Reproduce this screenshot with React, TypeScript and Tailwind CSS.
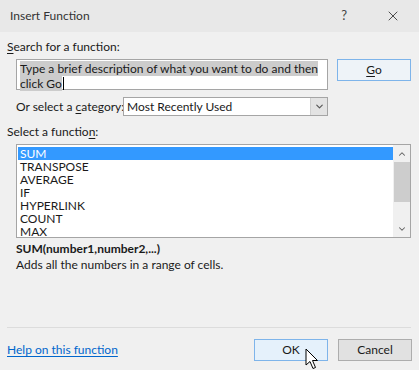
import { ChevronDown, ChevronUp, X } from 'lucide-react';

const functions = ['SUM', 'TRANSPOSE', 'AVERAGE', 'IF', 'HYPERLINK', 'COUNT', 'MAX'];

function Cursor() {
  return (
    <svg
      className="absolute left-[305px] top-[348px]"
      width="14"
      height="22"
      viewBox="0 0 14 22"
    >
      <path
        d="M1 1 L1 17 L5 13.5 L8 20.5 L10.5 19.5 L7.5 12.5 L12.5 12.5 Z"
        fill="white"
        stroke="black"
        strokeWidth="1"
        strokeLinejoin="round"
      />
    </svg>
  );
}

export default function App() {
  return (
    <div className="relative w-[419px] h-[370px] overflow-hidden bg-[#f0f0f0] font-['Lato',sans-serif] text-[12px] text-[#1a1a1a] whitespace-nowrap">
      {/* title bar */}
      <div className="flex h-[32px] items-center bg-[#e8e8e8] pl-[10px]">
        <span className="flex-1 text-[12px] text-[#333]">Insert Function</span>
        <span className="mr-[38px] text-[13px] text-[#444]">?</span>
        <X className="mr-[18px] h-[16px] w-[16px] text-[#333]" strokeWidth={1.3} />
      </div>

      <div className="flex flex-col px-[7px] pt-[7px]">
        <div className="h-[16px] leading-[16px]">
          <span className="underline underline-offset-2">S</span>earch for a function:
        </div>

        <div className="mt-[4px] flex items-start">
          <div className="ml-[9px] h-[31px] w-[312px] whitespace-normal border border-[#a5a5a5] bg-white px-[3px] pt-[2px] leading-[13px]">
            <span className="bg-[#cccccc]">
              Type a brief description of what you want to do and then click Go
            </span>
            <span className="ml-[1px] inline-block h-[13px] w-[1px] translate-y-[2px] bg-black" />
          </div>
          <button className="ml-[9px] h-[22px] w-[74px] border border-[#7eb4ea] bg-[#eef3f8] text-[12px]">
            <span className="underline underline-offset-2">G</span>o
          </button>
        </div>

        <div className="mt-[7px] flex h-[19px] items-center pl-[9px]">
          <span className="w-[107px]">
            Or select a <span className="underline underline-offset-2">c</span>ategory:
          </span>
          <div className="flex h-[19px] w-[205px] items-stretch border border-[#a5a5a5] bg-white">
            <span className="flex-1 pl-[3px] leading-[17px]">Most Recently Used</span>
            <span className="flex w-[17px] items-center justify-center border-l border-[#cfcfcf] bg-[#e3e3e3]">
              <ChevronDown className="h-[11px] w-[11px] text-[#555]" strokeWidth={2.5} />
            </span>
          </div>
        </div>

        <div className="mt-[8px] h-[16px] leading-[16px]">
          Select a functio<span className="underline underline-offset-2">n</span>:
        </div>

        <div className="ml-[9px] mt-[4px] flex h-[94px] w-[395px] border border-[#a5a5a5] bg-white">
          <div className="flex-1 pl-[1px] pt-[2px]">
            {functions.map((f, i) => (
              <div
                key={f}
                className={
                  i === 0
                    ? 'h-[13px] bg-[#3399ff] pl-[2px] leading-[13px] text-white'
                    : 'h-[13px] pl-[2px] leading-[13px]'
                }
              >
                {f}
              </div>
            ))}
          </div>
          <div className="flex w-[17px] flex-col items-center bg-[#f0f0f0]">
            <div className="flex h-[17px] items-center justify-center">
              <ChevronUp className="h-[10px] w-[10px] text-[#606060]" strokeWidth={2.5} />
            </div>
            <div className="h-[40px] w-[16px] bg-[#cdcdcd]" />
            <div className="flex-1" />
            <div className="flex h-[17px] items-center justify-center">
              <ChevronDown className="h-[10px] w-[10px] text-[#606060]" strokeWidth={2.5} />
            </div>
          </div>
        </div>

        <div className="ml-[9px] mt-[3px] h-[16px] font-bold leading-[16px]">
          SUM(number1,number2,...)
        </div>
        <div className="ml-[9px] h-[16px] leading-[16px]">
          Adds all the numbers in a range of cells.
        </div>

        <div className="mt-[54px] h-px w-[404px] bg-[#dcdcdc]" />

        <div className="mt-[11px] flex items-center">
          <span className="flex-1 text-[#0066cc] underline underline-offset-2">
            Help on this function
          </span>
          <button className="h-[22px] w-[74px] border border-[#7eb4ea] bg-[#e5f1fb] text-[12px]">
            OK
          </button>
          <button className="ml-[10px] h-[22px] w-[74px] border border-[#adadad] bg-[#e1e1e1] text-[12px]">
            Cancel
          </button>
        </div>
      </div>

      <Cursor />
    </div>
  );
}
